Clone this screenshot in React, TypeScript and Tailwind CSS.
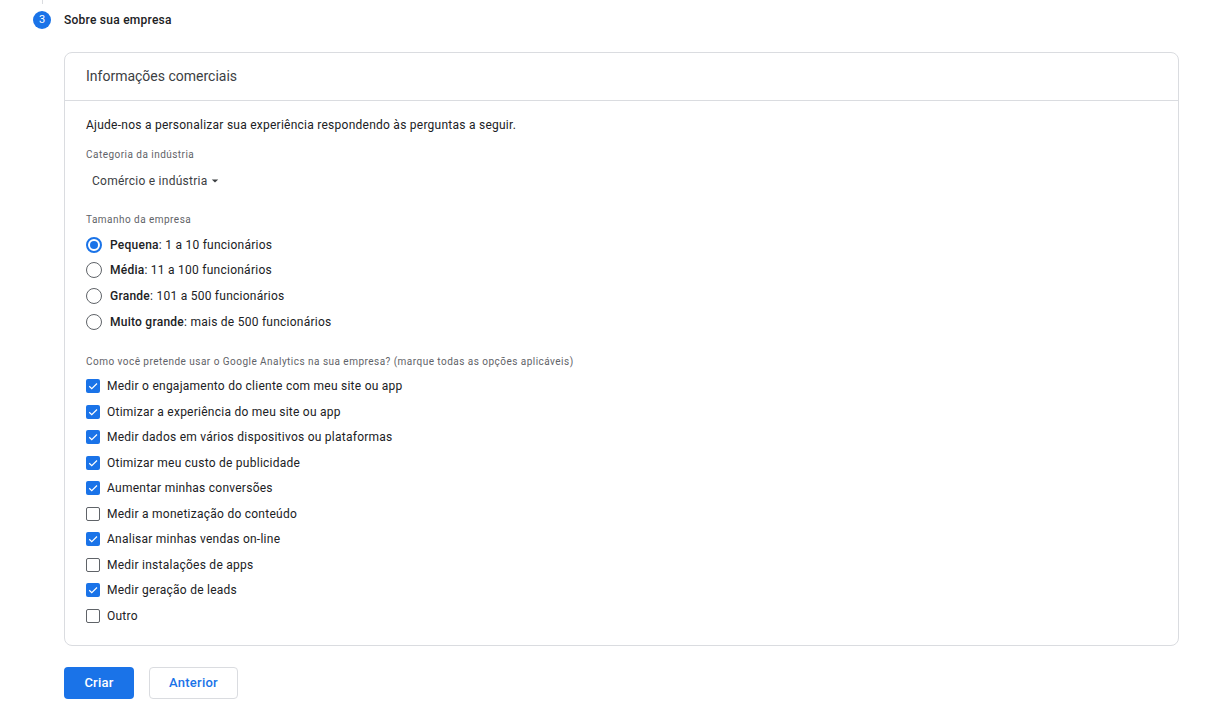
import React from "react";

const radios = [
  { b: "Pequena", t: ": 1 a 10 funcionários", on: true },
  { b: "Média", t: ": 11 a 100 funcionários", on: false },
  { b: "Grande", t: ": 101 a 500 funcionários", on: false },
  { b: "Muito grande", t: ": mais de 500 funcionários", on: false },
];

const checks = [
  { t: "Medir o engajamento do cliente com meu site ou app", on: true },
  { t: "Otimizar a experiência do meu site ou app", on: true },
  { t: "Medir dados em vários dispositivos ou plataformas", on: true },
  { t: "Otimizar meu custo de publicidade", on: true },
  { t: "Aumentar minhas conversões", on: true },
  { t: "Medir a monetização do conteúdo", on: false },
  { t: "Analisar minhas vendas on-line", on: true },
  { t: "Medir instalações de apps", on: false },
  { t: "Medir geração de leads", on: true },
  { t: "Outro", on: false },
];

function Radio({ on }: { on: boolean }) {
  return on ? (
    <div className="w-4 h-4 rounded-full border-2 border-[#1a73e8] flex items-center justify-center shrink-0">
      <div className="w-2 h-2 rounded-full bg-[#1a73e8]" />
    </div>
  ) : (
    <div className="w-4 h-4 rounded-full border-[1.5px] border-[#5f6368] shrink-0" />
  );
}

function Check({ on }: { on: boolean }) {
  return on ? (
    <div className="w-[14px] h-[14px] rounded-[2px] bg-[#1a73e8] flex items-center justify-center shrink-0">
      <svg width="12" height="12" viewBox="0 0 24 24" fill="none">
        <path d="M4.5 12.5l5 5L20 7" stroke="#fff" strokeWidth="2.4" />
      </svg>
    </div>
  ) : (
    <div className="w-[14px] h-[14px] rounded-[2px] border-[1.5px] border-[#5f6368] shrink-0" />
  );
}

export default function App() {
  return (
    <div
      className="w-[1210px] h-[713px] bg-white text-[#202124] overflow-hidden tracking-[0.25px]"
      style={{ fontFamily: "Roboto, 'Liberation Sans', sans-serif" }}
    >
      {/* stepper header */}
      <div className="relative h-[40px]">
        <div className="absolute left-[42px] top-0 w-px h-[4px] bg-[#dadce0]" />
        <div className="flex items-center pt-[11px] pl-[33px]">
          <div className="w-[18px] h-[18px] rounded-full bg-[#1a73e8] text-white text-[11px] tracking-normal flex items-center justify-center">
            3
          </div>
          <div className="ml-[13px] text-[12px] font-medium text-[#202124]">Sobre sua empresa</div>
        </div>
      </div>

      {/* card */}
      <div className="ml-[64px] mt-[12px] w-[1115px] border border-[#dadce0] rounded-[8px]">
        <div className="h-[48px] border-b border-[#dadce0] px-[21px] flex items-center text-[14px] text-[#3c4043] tracking-normal">
          Informações comerciais
        </div>
        <div className="px-[21px] pt-[16px] pb-[16px]">
          <div className="h-[16px] leading-[16px] text-[12px]">
            Ajude-nos a personalizar sua experiência respondendo às perguntas a seguir.
          </div>
          <div className="mt-[15px] h-[14px] leading-[14px] text-[10px] text-[#5f6368] tracking-[0.47px]">
            Categoria da indústria
          </div>
          <div className="mt-[7px] h-[24px] flex items-center pl-[6px] text-[12px] text-[#3c4043]">
            Comércio e indústria
            <svg className="ml-[4px]" width="8" height="8" viewBox="0 0 10 10">
              <path d="M1 3h8L5 7z" fill="#3c4043" />
            </svg>
          </div>
          <div className="mt-[20px] h-[14px] leading-[14px] text-[10px] text-[#5f6368] tracking-[0.47px]">
            Tamanho da empresa
          </div>
          <div className="mt-[5px] flex flex-col">
            {radios.map((r) => (
              <div key={r.b} className="h-[25.67px] flex items-center">
                <Radio on={r.on} />
                <div className="ml-[8px] text-[12px]">
                  <span className="font-medium">{r.b}</span>
                  {r.t}
                </div>
              </div>
            ))}
          </div>
          <div className="mt-[20px] h-[14px] leading-[14px] text-[10px] text-[#5f6368] tracking-[0.47px]">
            Como você pretende usar o Google Analytics na sua empresa? (marque todas as opções aplicáveis)
          </div>
          <div className="mt-[5px] flex flex-col">
            {checks.map((c) => (
              <div key={c.t} className="h-[25.5px] flex items-center">
                <Check on={c.on} />
                <div className="ml-[7px] text-[12px]">{c.t}</div>
              </div>
            ))}
          </div>
        </div>
      </div>

      {/* buttons */}
      <div className="ml-[64px] mt-[21px] flex gap-[15px]">
        <button className="w-[70px] h-[32px] rounded-[4px] bg-[#1a73e8] text-white text-[13px] font-medium">
          Criar
        </button>
        <button className="w-[89px] h-[32px] rounded-[4px] border border-[#dadce0] bg-white text-[#1a73e8] text-[13px] font-medium">
          Anterior
        </button>
      </div>
    </div>
  );
}
